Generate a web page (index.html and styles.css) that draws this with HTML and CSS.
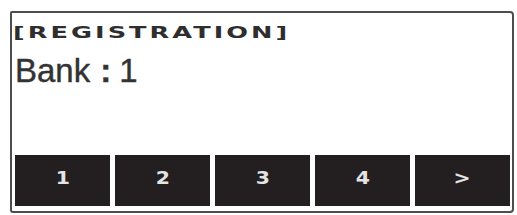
FILE: index.html
```html
<!DOCTYPE html>
<html lang="en">
<head>
    <meta charset="UTF-8">
    <meta name="viewport" content="width=device-width, initial-scale=1.0">
    <title>Registration</title>
    <link rel="stylesheet" href="styles.css">
</head>
<body>

<div class="LcdScreen">
    <div class="lcdTitle"><span>[REGISTRATION]</span></div>
    <div class="lcdValue">Bank<span class="colon">:</span>1</div>

    <!-- soft keys along the bottom of the display -->
    <div class="softKeys">
        <div class="softKey"><span>1</span></div>
        <div class="softKey"><span>2</span></div>
        <div class="softKey"><span>3</span></div>
        <div class="softKey"><span>4</span></div>
        <div class="softKey"><span>&gt;</span></div>
    </div>
</div>

</body>
</html>
```

FILE: styles.css
```css
body {
    margin: 0;
    background-color: #fff;
}

.LcdScreen {
    box-sizing: border-box;
    width: 504px;
    height: 202px;
    margin: 11px 0 0 10px;
    border: 2px solid #4d4d4d;
    border-radius: 2px 4px 4px 3px;
    padding: 0 2px 5px 3px;
    display: flex;
    flex-direction: column;
}

.lcdTitle {
    margin: 12px 0 0 -2px;
    height: 16px;
    line-height: 16px;
    font-family: "DejaVu Sans", sans-serif;
    font-weight: bold;
    font-size: 16px;
    color: #2e2e2e;
    white-space: nowrap;
}

.lcdTitle span {
    display: inline-block;
    letter-spacing: 1.9px;
    transform: scaleX(1.6);
    transform-origin: left center;
}

.lcdValue {
    margin-top: 12px;
    height: 36px;
    line-height: 36px;
    font-family: "Liberation Sans", Arial, sans-serif;
    font-size: 33px;
    color: #333;
    -webkit-text-stroke: 0.4px #333;
}

.colon {
    font-weight: bold;
    margin: 0 8px 0 10px;
}

.softKeys {
    margin-top: auto;
    display: grid;
    grid-template-columns: repeat(5, 1fr);
    gap: 5px;
}

.softKey {
    height: 51px;
    background-color: #231f20;
    display: flex;
    align-items: center;
    justify-content: center;
    padding-bottom: 6px;
    box-sizing: border-box;
}

.softKey span {
    font-family: "DejaVu Sans", sans-serif;
    font-weight: bold;
    font-size: 17px;
    color: #e4e4e4;
    transform: scaleX(1.2);
}
```
